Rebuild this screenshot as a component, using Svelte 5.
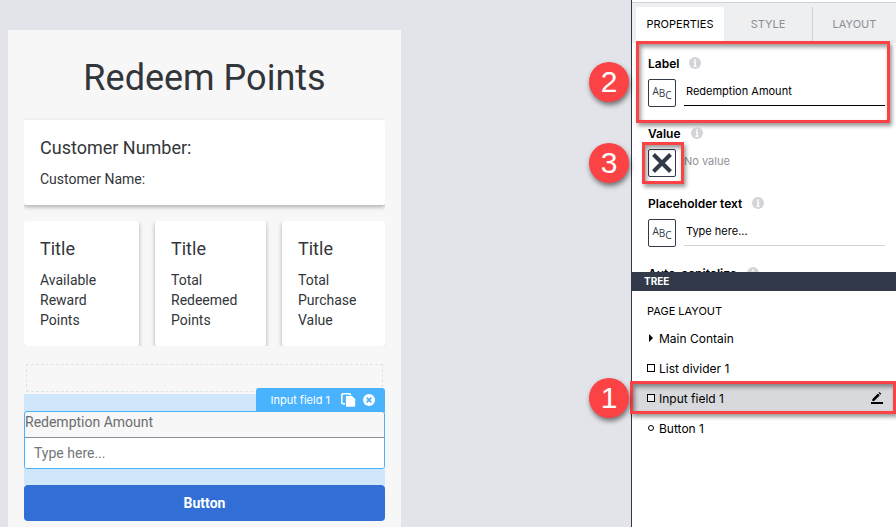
<script>
  const stats = [
    { title: 'Title', text: 'Available Reward Points' },
    { title: 'Title', text: 'Total Redeemed Points' },
    { title: 'Title', text: 'Total Purchase Value' }
  ];

  const tabs = ['Properties', 'Style', 'Layout'];
  let activeTab = $state('Properties');

  const fields = [
    { id: 'label', name: 'Label', kind: 'text', value: 'Redemption Amount', focused: true, step: 2 },
    { id: 'value', name: 'Value', kind: 'unbound', value: 'No value', step: 3 },
    { id: 'placeholder', name: 'Placeholder text', kind: 'text', value: 'Type here...' },
    { id: 'capitalize', name: 'Auto-capitalize', kind: 'collapsed' }
  ];

  const nodes = [
    { name: 'Main Contain', icon: 'arrow' },
    { name: 'List divider 1', icon: 'square' },
    { name: 'Input field 1', icon: 'square', step: 1 },
    { name: 'Button 1', icon: 'circle' }
  ];
  let selected = $state('Input field 1');
</script>

<div class="app">
  <main class="canvas">
    <div class="device">
      <h1>Redeem Points</h1>

      <section class="card customer">
        <h2>Customer Number:</h2>
        <p>Customer Name:</p>
      </section>

      <div class="stats">
        {#each stats as stat}
          <section class="card">
            <h2>{stat.title}</h2>
            <p>{stat.text}</p>
          </section>
        {/each}
      </div>

      <div class="divider"></div>

      <div class="selection">
        <div class="tag">
          <span>Input field 1</span>
          <button class="bare" aria-label="Duplicate">
            <svg width="15" height="14" viewBox="0 0 15 14">
              <path d="M4 10.700H2A1.200 1.200 0 0 1 .8 9.500V2A1.200 1.200 0 0 1 2 .8H8.300A1.200 1.200 0 0 1 9.500 2V2.500" fill="none" stroke="#fff" stroke-width="1.600" />
              <path d="M5.500 3H11L14.200 6V12.500A1.300 1.300 0 0 1 12.900 13.800H6.200A1.300 1.300 0 0 1 4.900 12.500V3.600Z" fill="#fff" />
            </svg>
          </button>
          <button class="bare" aria-label="Remove">
            <svg width="12" height="12" viewBox="0 0 12 12">
              <circle cx="6" cy="6" r="6" fill="#fff" />
              <path d="M3.700 3.700L8.300 8.300M8.300 3.700L3.700 8.300" stroke="#4ab3ff" stroke-width="1.800" />
            </svg>
          </button>
        </div>
        <div class="field">
          <label for="amount">Redemption Amount</label>
          <input id="amount" type="text" placeholder="Type here..." />
        </div>
      </div>

      <button class="primary">Button</button>
    </div>
  </main>

  <aside class="panel">
    <div class="tabs" role="tablist">
      {#each tabs as tab}
        <button role="tab" aria-selected={activeTab === tab} class:active={activeTab === tab} onclick={() => (activeTab = tab)}>{tab}</button>
      {/each}
    </div>

    <div class="properties">
      {#each fields as f}
        <div class="property">
          <div class="caption">
            {#if f.kind === 'collapsed'}
              <span>{f.name}</span>
            {:else}
              <label for={f.id}>{f.name}</label>
            {/if}
            <svg width="12" height="12" viewBox="0 0 12 12" aria-hidden="true">
              <circle cx="6" cy="6" r="6" fill="#d3d4d9" />
              <path d="M6 2.300V4M4.800 5.300H6.200V9M4.600 9.200H7.400" fill="none" stroke="#fff" stroke-width="1.400" />
            </svg>
          </div>
          {#if f.kind === 'unbound'}
            <div class="control">
              <button class="binding" aria-label="Bind value">
                <svg width="20" height="20" viewBox="0 0 20 20">
                  <path d="M1.500 1.500L18.500 18.500M18.500 1.500L1.500 18.500" stroke="#323949" stroke-width="4" />
                </svg>
              </button>
              <input id={f.id} class="empty" type="text" placeholder={f.value} />
              <span class="outline around-icon"></span>
              <span class="step beside-icon">{f.step}</span>
            </div>
          {:else if f.kind === 'text'}
            <div class="control">
              <button class="binding" aria-label="Text binding">
                <span class="a">A</span><span>B</span><span class="c">C</span>
              </button>
              <input id={f.id} class:focused={f.focused} type="text" value={f.value} />
            </div>
            {#if f.step}
              <span class="outline around-property"></span>
              <span class="step beside-property">{f.step}</span>
            {/if}
          {/if}
        </div>
      {/each}
    </div>

    <div class="tree">
      <h3>TREE</h3>
      <h4>PAGE LAYOUT</h4>
      {#each nodes as n}
        <div class="node" class:selected={selected === n.name}>
          <button class="bare name" onclick={() => (selected = n.name)}>
            <svg width="8" height="8" viewBox="0 0 8 8">
              {#if n.icon === 'arrow'}
                <path d="M2 0L6 4L2 8Z" fill="#000" />
              {:else if n.icon === 'square'}
                <rect x=".5" y=".5" width="7" height="7" fill="#fff" fill-opacity=".5" stroke="#000" />
              {:else}
                <circle cx="4" cy="4" r="2.500" fill="#fff" stroke="#000" />
              {/if}
            </svg>
            {n.name}
          </button>
          {#if selected === n.name}
            <button class="bare" aria-label="Rename">
              <svg width="12" height="12" viewBox="0 0 12 12">
                <path d="M0 11H12" stroke="#000" stroke-width="2" />
                <path d="M1.300 9V7.200L6.900 1.600L8.700 3.400L3.100 9ZM7.600 .9L8.500 0L10.300 1.800L9.400 2.700Z" fill="#000" />
              </svg>
            </button>
          {/if}
          {#if n.step}
            <span class="outline around-node"></span>
            <span class="step beside-node">{n.step}</span>
          {/if}
        </div>
      {/each}
    </div>
  </aside>
</div>

<style>
  :global(body) {
    margin: 0;
  }

  :global(:where(.app *)) {
    box-sizing: border-box;
    margin: 0;
  }

  .app {
    display: flex;
    height: 100vh;
    overflow: hidden;
    font-family: Inter, 'Open Sans', sans-serif;
    font-size: 12px;
    color: #000;
  }

  button,
  input {
    font: inherit;
    color: inherit;
    border: 0;
    padding: 0;
    border-radius: 0;
    background: none;
    outline: none;
  }

  svg {
    display: block;
    flex: none;
  }

  .bare {
    display: flex;
    align-items: center;
  }

  .canvas {
    flex: 1;
    min-width: 0;
    padding: 30px 8px 0;
    background: #e3e4e9;
  }

  .device {
    width: 393px;
    min-height: 100%;
    padding: 24px 16px;
    background: #f7f7f7;
    color: #32363a;
    font-family: Roboto, 'Open Sans', sans-serif;
    font-size: 14px;
    line-height: 20px;
  }

  h1 {
    margin-bottom: 18px;
    font-size: 36px;
    font-weight: 400;
    line-height: 48px;
    text-align: center;
  }

  h2 {
    margin-bottom: 9px;
    font-size: 18px;
    font-weight: 400;
    line-height: 24px;
  }

  .card {
    padding: 16px;
    background: #fff;
    border-radius: 2px;
    box-shadow: 0 2px 4px rgba(0, 0, 0, 0.3);
  }

  .customer {
    clip-path: inset(-8px 0);
  }

  .stats {
    display: grid;
    grid-template-columns: 115fr 111fr 103fr;
    gap: 16px;
    margin-top: 16px;
    clip-path: inset(0);
  }

  .divider {
    height: 28px;
    margin: 18px 2px 2px;
    border: 1px dashed #d9e6ea;
  }

  .selection {
    position: relative;
    padding: 17px 0 16px;
    background: #d0e6fa;
  }

  .tag {
    position: absolute;
    right: 0;
    bottom: 73px;
    display: flex;
    align-items: center;
    gap: 7px;
    height: 24px;
    padding: 0 10px 0 14px;
    border-radius: 3px 3px 0 0;
    background: #4ab3ff;
    color: #fff;
    font-family: Inter, 'Open Sans', sans-serif;
    font-size: 11px;
  }

  .tag span {
    margin-right: 4px;
  }

  .field {
    display: flex;
    flex-direction: column;
    border: 1px solid #4ab3ff;
    border-radius: 3px;
    background: #f7f7f7;
    color: #6a6d70;
    overflow: hidden;
  }

  .field label {
    height: 25px;
  }

  .field input {
    height: 31px;
    padding: 0 9px;
    border-top: 1px solid #89919a;
    background: #fff;
  }

  .field input::placeholder {
    color: #74777a;
    opacity: 1;
  }

  .primary {
    width: 100%;
    height: 36px;
    border-radius: 4px;
    background: #316fd6;
    color: #fff;
    font-weight: 700;
  }

  .panel {
    display: flex;
    flex-direction: column;
    width: 265px;
    flex: none;
    padding-top: 2px;
    border-left: 1px solid #323949;
    background: #fff;
  }

  .tabs {
    display: flex;
    height: 41px;
    flex: none;
    padding: 4px 0 0 4px;
    border-top: 1px solid #d0d1d5;
    background: #eeeff1;
  }

  .tabs button {
    flex: 0 0 88px;
    padding-bottom: 3px;
    font-size: 11px;
    text-transform: uppercase;
    color: #8b8d94;
  }

  .tabs button:last-child {
    flex: 1;
    border-left: 1px solid #d0d1d5;
  }

  .tabs button.active {
    border-radius: 2px 2px 0 0;
    background: #fff;
    color: #000;
  }

  .properties {
    display: flex;
    flex-direction: column;
    gap: 18px;
    height: 229px;
    flex: none;
    padding: 12px 11px 0 16px;
  }

  .property {
    position: relative;
  }

  .caption {
    display: flex;
    align-items: center;
    gap: 10px;
    height: 16px;
    margin-bottom: 8px;
    font-weight: 600;
  }

  .control {
    position: relative;
    display: flex;
    align-items: flex-start;
    gap: 8px;
    font-size: 11px;
  }

  .control input {
    flex: 1;
    min-width: 0;
    height: 27px;
    padding: 0 2px 2px;
    border-bottom: 1px solid #d3d4d9;
  }

  .control input.focused {
    border-color: #000;
  }

  .control input.empty {
    padding-left: 0;
    border-color: transparent;
  }

  .control input.empty::placeholder {
    color: #8f9095;
    opacity: 1;
  }

  .binding {
    display: flex;
    align-items: center;
    justify-content: center;
    width: 28px;
    height: 28px;
    flex: none;
    border: 1px solid #323949;
    border-radius: 2px;
    background: #fff;
    color: #323949;
    font-family: 'Open Sans', sans-serif;
    font-size: 10px;
    line-height: 12px;
  }

  .a {
    padding-bottom: 4px;
  }

  .c {
    padding-top: 4px;
  }

  .tree {
    position: relative;
    flex: 1;
    background: #fff;
  }

  h3 {
    margin-bottom: 12px;
    padding-left: 12px;
    background: #323949;
    color: #fff;
    font-size: 10px;
    font-weight: 700;
    line-height: 19px;
  }

  h4 {
    margin-bottom: 4px;
    padding-left: 15px;
    font-size: 11px;
    font-weight: 400;
    line-height: 16px;
  }

  .node {
    position: relative;
    display: flex;
    align-items: center;
    justify-content: space-between;
    height: 30px;
    padding: 0 13px 0 15px;
  }

  .name {
    gap: 4px;
    height: 100%;
  }

  .node.selected {
    background: #d8d9dd;
  }

  .outline {
    position: absolute;
    border: 3px solid #fb4346;
    box-shadow: 2px 3px 4px rgba(0, 0, 0, 0.4), inset 2px 3px 4px rgba(0, 0, 0, 0.4);
    pointer-events: none;
  }

  .around-property {
    inset: -14px -5px -16px -12px;
  }

  .around-icon {
    top: -7px;
    left: -6px;
    width: 42px;
    height: 42px;
  }

  .around-node {
    inset: -2px 0 -1px -2px;
  }

  .step {
    position: absolute;
    width: 40px;
    height: 40px;
    border-radius: 50%;
    background: #fb4346;
    box-shadow: 1px 3px 5px rgba(0, 0, 0, 0.5);
    color: #fff;
    font-family: 'Liberation Sans', Arial, sans-serif;
    font-size: 30px;
    line-height: 40px;
    text-align: center;
  }

  .beside-property {
    top: 7px;
    left: -59px;
  }

  .beside-icon {
    top: -6px;
    left: -59px;
  }

  .beside-node {
    top: -5px;
    left: -43px;
  }
</style>
